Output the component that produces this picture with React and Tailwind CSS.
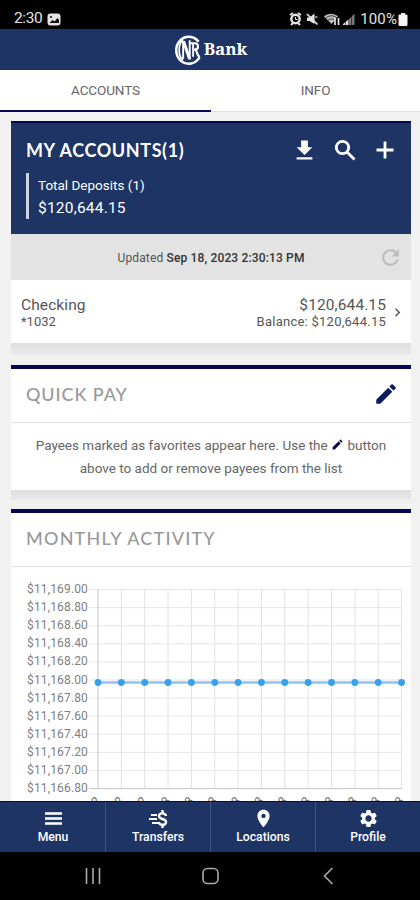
import {
  MdChevronRight,
  MdEdit,
  MdFileDownload,
  MdPlace,
  MdRefresh,
  MdSettings,
} from "react-icons/md";

const yLabels = [
  "$11,169.00",
  "$11,168.80",
  "$11,168.60",
  "$11,168.40",
  "$11,168.20",
  "$11,168.00",
  "$11,167.80",
  "$11,167.60",
  "$11,167.40",
  "$11,167.20",
  "$11,167.00",
  "$11,166.80",
];

const xLabels = [
  "10/2022", "11/2022", "12/2022", "01/2023", "02/2023", "03/2023", "04/2023",
  "05/2023", "06/2023", "07/2023", "08/2023", "09/2023", "10/2023", "11/2023",
];

const StatusBar = () => (
  <div className="h-[29px] shrink-0 bg-black text-[#e4e4e4] flex justify-between items-center pl-3.5 pr-3 pt-[9px]">
    <div className="flex items-center gap-[5px]">
      <span className="text-[15.5px] leading-none tracking-[-0.4px]">2:30</span>
      <svg className="w-[14px] h-[13px]" viewBox="0 0 14 13">
        <rect x="0.5" y="0.5" width="13" height="12" rx="3" fill="#e4e4e4" />
        <path d="M2.5 10l3-3 2 1.5 3-3.5 1.5 2v3z" fill="#111" />
        <circle cx="4" cy="4" r="1.1" fill="#111" />
      </svg>
    </div>
    <div className="flex items-center">
      <svg className="w-[66px] h-[14px] mr-[5px]" viewBox="0 0 66 14" fill="none" stroke="#e4e4e4">
        {/* alarm */}
        <path d="M1 3l3-2M9 1l3 2M2 13l2-2M11 13l-2-2" strokeWidth="2" />
        <circle cx="6.5" cy="7" r="4.2" strokeWidth="2.4" />
        <path d="M6.5 5v2.5h2" strokeWidth="1" />
        {/* muted speaker */}
        <path d="M18 5.5h2.5L25.5 1.5V12L20.5 9H18z" fill="#e4e4e4" stroke="none" />
        <path d="M18 2l10.5 10.5" strokeWidth="1.7" />
        <path d="M26 5h2.5" strokeWidth="1.2" />
        {/* wifi */}
        <path d="M35 4.5c4-3.6 10-3.6 14 0L42.5 12z" fill="#bdbdbd" stroke="none" />
        <path d="M37 6c3.5-3 7.5-3 11 0M39 8.5c2-2 5-2 7 0" stroke="#333" strokeWidth="1" />
        <path d="M46 6v7M49.5 13V6" strokeWidth="1.7" />
        {/* signal */}
        <path d="M54 13h2.5v-3L54 12zM57 13h2.5V7.5L57 9.5z" fill="#e4e4e4" stroke="none" />
        <path d="M60 13V7l2.5-2.5V13zM63 13V4l2.5-2.5V13z" fill="#777" stroke="none" />
      </svg>
      <span className="text-[15px] leading-none tracking-[0.1px]">100%</span>
      <svg className="w-[10px] h-[13px] ml-[1px]" viewBox="0 0 10 13" fill="#f4f4f4">
        <path d="M3 0h4v1.5h1.5q1 0 1 1v9q0 1.5-1.5 1.5H2Q.5 13 .5 11.5v-9q0-1 1-1H3z" />
      </svg>
    </div>
  </div>
);

const BankHeader = () => (
  <header className="h-[41px] shrink-0 bg-[#1d3465] flex items-center justify-center gap-[2px]">
    <svg className="w-[29px] h-[32px]" viewBox="0 0 30 32" fill="none" stroke="white">
      <path d="M26.5 7.5A13 14 0 1 0 27.5 23.5" strokeWidth="2.6" />
      <path d="M10.500 6C5 9 5 23 10.500 26" strokeWidth="1.8" />
      <path d="M10.500 7v18" strokeWidth="2" />
      <path d="M11 7l6 18" strokeWidth="3" />
      <path d="M17.300 6v20" strokeWidth="2" />
      <path d="M20.800 9v14" strokeWidth="2" />
      <path d="M17.500 9h5c4.500 0 4.500 6.500 0 6.500h-2M22 15.500c4 0 2 7.500 6 7.500" strokeWidth="2.2" />
    </svg>
    <span className="font-['Noto_Serif','Liberation_Serif',serif] font-bold text-white text-[17px] leading-none tracking-[-0.1px] pb-[2px]">
      Bank
    </span>
  </header>
);

const Tabs = () => (
  <div className="h-[42px] shrink-0 flex bg-white text-[13.5px] text-[#666] tracking-[-0.1px]">
    <div className="w-[211px] flex items-center justify-center border-b-2 border-[#070752]">ACCOUNTS</div>
    <div className="flex-1 flex items-center justify-center border-b border-[#ddd]">INFO</div>
  </div>
);

const SearchIcon = () => (
  <svg className="w-[22px] h-[22px]" viewBox="0 0 22 22" fill="none" stroke="white" strokeWidth="2.8">
    <circle cx="8.500" cy="8.500" r="6.200" />
    <path d="M13 13l7.500 7.500" />
  </svg>
);

const PlusIcon = () => (
  <svg className="w-[18px] h-[18px]" viewBox="0 0 18 18" stroke="white" strokeWidth="2.8">
    <path d="M9 0.500v17M0.500 9h17" />
  </svg>
);

const Accounts = () => (
  <section className="mb-[10px]">
    <div className="h-[113px] bg-[#1d3465] border-t-2 border-[#070752] text-white pl-[15px] pr-[17px] pt-[13px]">
      <div className="flex items-center justify-between h-[28px]">
        <h2 className="font-[Lato,sans-serif] font-bold text-[18px] tracking-[0.6px]">MY ACCOUNTS(1)</h2>
        <div className="flex items-center">
          <MdFileDownload className="text-[27px] mr-[16px]" />
          <SearchIcon />
          <div className="w-[20px]" />
          <PlusIcon />
        </div>
      </div>
      <div className="mt-[9px] h-[46px] border-l-[3px] border-[#cdd3e2] pl-[9px] flex flex-col justify-center">
        <div className="text-[13.5px] leading-[23px]">Total Deposits (1)</div>
        <div className="text-[15.5px] leading-[22px] tracking-[0.2px]">$120,644.15</div>
      </div>
    </div>
    <div className="h-[46px] bg-[#e3e3e3] flex items-center text-[12px] text-[#555] pr-[8px] pt-px">
      <div className="flex-1 text-center pl-[33px] tracking-[0.15px]">
        Updated <span className="font-medium text-[#333]">Sep 18, 2023 2:30:13 PM</span>
      </div>
      <MdRefresh className="text-[25px] text-[#bcbcbc]" />
    </div>
    <div className="h-[63px] bg-white flex items-center pl-[10px] pr-[5px] pt-[2px] text-[#555]">
      <div className="flex-1">
        <div className="text-[15.5px] leading-[18px] tracking-[0.1px]">Checking</div>
        <div className="text-[13px] leading-[16px]">*1032</div>
      </div>
      <div className="text-right">
        <div className="text-[15.5px] leading-[18px] tracking-[0.1px]">$120,644.15</div>
        <div className="text-[13px] leading-[16px] tracking-[0.25px]">Balance: $120,644.15</div>
      </div>
      <MdChevronRight className="text-[17px] ml-[3px]" />
    </div>
    <div className="h-[12px] bg-linear-to-b from-[#dedede] to-[#eaeaea]" />
  </section>
);

const QuickPay = () => (
  <section className="mb-[9px] border-t-4 border-[#070752]">
    <div className="h-[54px] bg-white border-b border-[#ddd] flex items-center justify-between pl-[15px] pr-[12px] pb-[3px]">
      <h2 className="font-[Lato,sans-serif] font-medium text-[18px] tracking-[0.9px] text-[#999]">QUICK PAY</h2>
      <MdEdit className="text-[26px] text-[#0b1d5b]" />
    </div>
    <p className="h-[67px] bg-white pt-[11px] text-center text-[13.5px] leading-[23px] text-[#666]">
      Payees marked as favorites appear here. Use the{" "}
      <MdEdit className="inline text-[13px] text-[#070752] mb-[3px]" /> button
      <br />
      above to add or remove payees from the list
    </p>
    <div className="h-[10px] bg-linear-to-b from-[#dedede] to-[#eaeaea]" />
  </section>
);

const Chart = () => (
  <svg className="block w-[400px] h-[240px]" viewBox="0 0 400 240">
    {yLabels.map((label, i) => (
      <g key={label}>
        <text x="16" y={26 + i * 18.1} fontSize="12" letterSpacing="0.15" fill="#808080">
          {label}
        </text>
        <path d={`M78 ${22.5 + i * 18.1}H391`} stroke={i === 11 ? "#c4c4c4" : "#e6e6e6"} />
      </g>
    ))}
    {xLabels.map((label, i) => (
      <g key={label}>
        <path d={`M${87 + i * 23.35} 22.5V221.6`} stroke={i === 0 ? "#c4c4c4" : "#e2e2e2"} />
        <text
          x={90 + i * 23.35}
          y="234"
          fontSize="12"
          fill="#666"
          textAnchor="end"
          transform={`rotate(-50 ${90 + i * 23.35} 234)`}
        >
          {label}
        </text>
      </g>
    ))}
    <path d="M87 115.5H390.5" stroke="#8cc4f3" strokeWidth="2.5" />
    {xLabels.map((label, i) => (
      <circle key={label} cx={87 + i * 23.35} cy="115.5" r="3.4" fill="#36a2eb" />
    ))}
  </svg>
);

const MonthlyActivity = () => (
  <section className="bg-white border-t-4 border-[#070752]">
    <div className="h-[54px] border-b border-[#ddd] flex items-center pl-[15px] pb-[2px]">
      <h2 className="font-[Lato,sans-serif] font-medium text-[18px] tracking-[1.2px] text-[#999]">MONTHLY ACTIVITY</h2>
    </div>
    <Chart />
  </section>
);

const NavItem = ({ icon, label }) => (
  <div className="flex-1 flex flex-col items-center pt-[6px] border-l border-[#3d5485] first:border-l-0">
    <div className="h-[21px] flex items-center justify-center text-[21px]">{icon}</div>
    <div className="text-[12.2px] leading-[17px] font-medium">{label}</div>
  </div>
);

const MenuIcon = () => (
  <svg className="w-[17px] h-[13px]" viewBox="0 0 17 13" stroke="white" strokeWidth="2.4">
    <path d="M0 1.5h17M0 6.5h17M0 11.5h17" />
  </svg>
);

const TransferIcon = () => (
  <svg className="w-[20px] h-[18px]" viewBox="0 0 20 18" fill="none" stroke="white">
    <path d="M3 5h6M1 9h8M4 13h6" strokeWidth="1.8" />
    <path d="M18 6C17.5 2.5 11 2.5 11 6c0 4 7 2 7 6 0 4-6.5 3.5-7.5 0M14.5 0v3.5M14.5 14.5V18" strokeWidth="2.4" />
  </svg>
);

const BottomNav = () => (
  <nav className="h-[51px] shrink-0 bg-[#1d3465] border-t border-[#070752] text-white flex pl-px">
    <NavItem icon={<MenuIcon />} label="Menu" />
    <NavItem icon={<TransferIcon />} label="Transfers" />
    <NavItem icon={<MdPlace />} label="Locations" />
    <NavItem icon={<MdSettings />} label="Profile" />
  </nav>
);

const SystemNav = () => (
  <div className="h-[48px] shrink-0 bg-black flex items-center justify-center">
    <svg className="w-[260px] h-[20px]" viewBox="0 0 260 20" fill="none" stroke="#aaa" strokeWidth="1.6">
      <path d="M6.5 2v16M13 2v16M19.5 2v16" />
      <rect x="123" y="2.5" width="15" height="15" rx="4.5" />
      <path d="M252.5 2l-8 8 8 8" />
    </svg>
  </div>
);

const App = () => {
  return (
    <div className="w-[420px] h-[900px] overflow-hidden flex flex-col bg-[#f1f1f1] font-[Roboto,sans-serif]">
      <StatusBar />
      <BankHeader />
      <Tabs />
      <main className="flex-1 min-h-0 overflow-hidden pl-[11px] pr-[9px] pt-[9px]">
        <Accounts />
        <QuickPay />
        <MonthlyActivity />
      </main>
      <BottomNav />
      <SystemNav />
    </div>
  );
};

export default App;
